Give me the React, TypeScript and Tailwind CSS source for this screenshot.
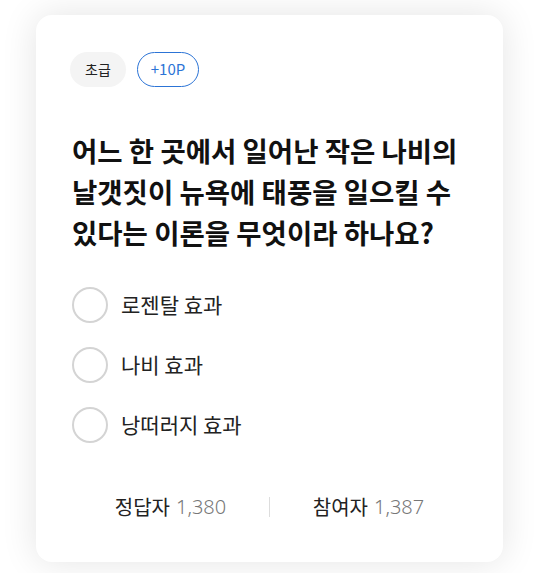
const FONT = "font-['Noto_Sans_CJK_KR','Noto_Sans',sans-serif]";

const OPTIONS = ["로젠탈 효과", "나비 효과", "낭떠러지 효과"];

function Stat({ label, value }: { label: string; value: string }) {
  return (
    <div className="flex-1 flex items-center justify-center gap-[6px] text-[20px] leading-[26px]">
      <span className="text-[#222]">{label}</span>
      <span className="text-[#777] font-['Noto_Sans',sans-serif] font-light">{value}</span>
    </div>
  );
}

export default function App() {
  return (
    <div className={`min-h-[573px] bg-white pt-[15px] px-[36px] ${FONT}`}>
      <div className="bg-white rounded-[16px] shadow-[0_0_36px_rgba(0,0,0,0.11)] px-[36px] pt-[37px] pb-[42px]">
        <div className="flex items-center gap-[11px]">
          <span className="h-[35px] px-[15px] rounded-full bg-[#f4f4f4] text-[14px] text-[#222] flex items-center -ml-[2px]">
            초급
          </span>
          <span className="h-[35px] px-[13px] rounded-full border-[1.5px] border-[#2c74d6] text-[15px] text-[#2c74d6] flex items-center">
            +10P
          </span>
        </div>

        <h2 className="mt-[43px] text-[27.5px] leading-[41px] font-bold text-[#111] break-keep">
          어느 한 곳에서 일어난 작은 나비의 날갯짓이 뉴욕에 태풍을 일으킬 수 있다는 이론을 무엇이라 하나요?
        </h2>

        <ul className="mt-[34px] flex flex-col gap-[24px]">
          {OPTIONS.map((o) => (
            <li key={o} className="flex items-center gap-[13px]">
              <span className="w-[36px] h-[36px] rounded-full border-2 border-[#d4d4d4] bg-white shrink-0" />
              <span className="text-[21px] text-[#222]">{o}</span>
            </li>
          ))}
        </ul>

        <div className="mt-[51px] flex items-center">
          <Stat label="정답자" value="1,380" />
          <span className="w-px h-[20px] bg-[#ddd]" />
          <Stat label="참여자" value="1,387" />
        </div>
      </div>
    </div>
  );
}
